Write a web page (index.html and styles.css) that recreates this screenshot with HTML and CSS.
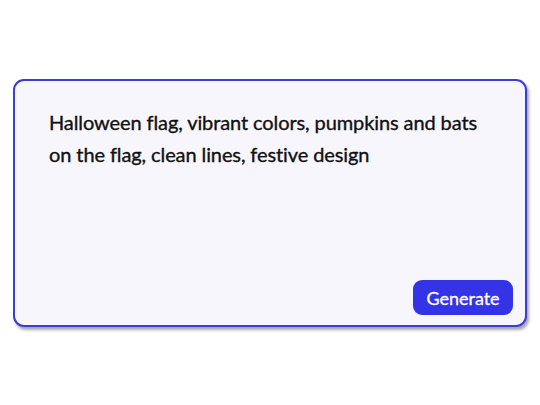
FILE: index.html
```html
<!DOCTYPE html>
<html>
<head>
<meta charset="utf-8">
<link rel="stylesheet" href="styles.css">
</head>
<body>
<div class="page">
  <div class="card">
    <p class="prompt">Halloween flag, vibrant colors, pumpkins and bats on the flag, clean lines, festive design</p>
    <div class="actions">
      <button class="btn">Generate</button>
    </div>
  </div>
</div>
</body>
</html>
```
FILE: styles.css
```css
html, body {
  margin: 0;
  padding: 0;
  background: #ffffff;
}
.page {
  width: 540px;
  height: 405px;
  box-sizing: border-box;
  padding: 79px 13px 0 13px;
}
.card {
  width: 514px;
  height: 248px;
  box-sizing: border-box;
  border: 2px solid #3c3cd6;
  border-radius: 11px;
  background: #f8f6fd;
  box-shadow: 2px 3px 3px rgba(0,0,0,0.35);
  padding: 25px 34px 10px 34px;
  display: flex;
  flex-direction: column;
}
.prompt {
  margin: 0;
  font-family: Lato, sans-serif;
  font-weight: 400;
  font-size: 20px;
  line-height: 32px;
  letter-spacing: -0.1px;
  color: #111111;
  -webkit-text-stroke: 0.35px #111111;
  flex: 1;
}
.actions {
  display: flex;
  justify-content: flex-end;
  margin-right: -22px;
}
.btn {
  width: 100px;
  height: 35px;
  border: none;
  border-radius: 9px;
  background: #3434e6;
  color: #ffffff;
  font-family: Lato, sans-serif;
  font-weight: 400;
  font-size: 18px;
  -webkit-text-stroke: 0.3px #ffffff;
  padding: 0;
}
```
